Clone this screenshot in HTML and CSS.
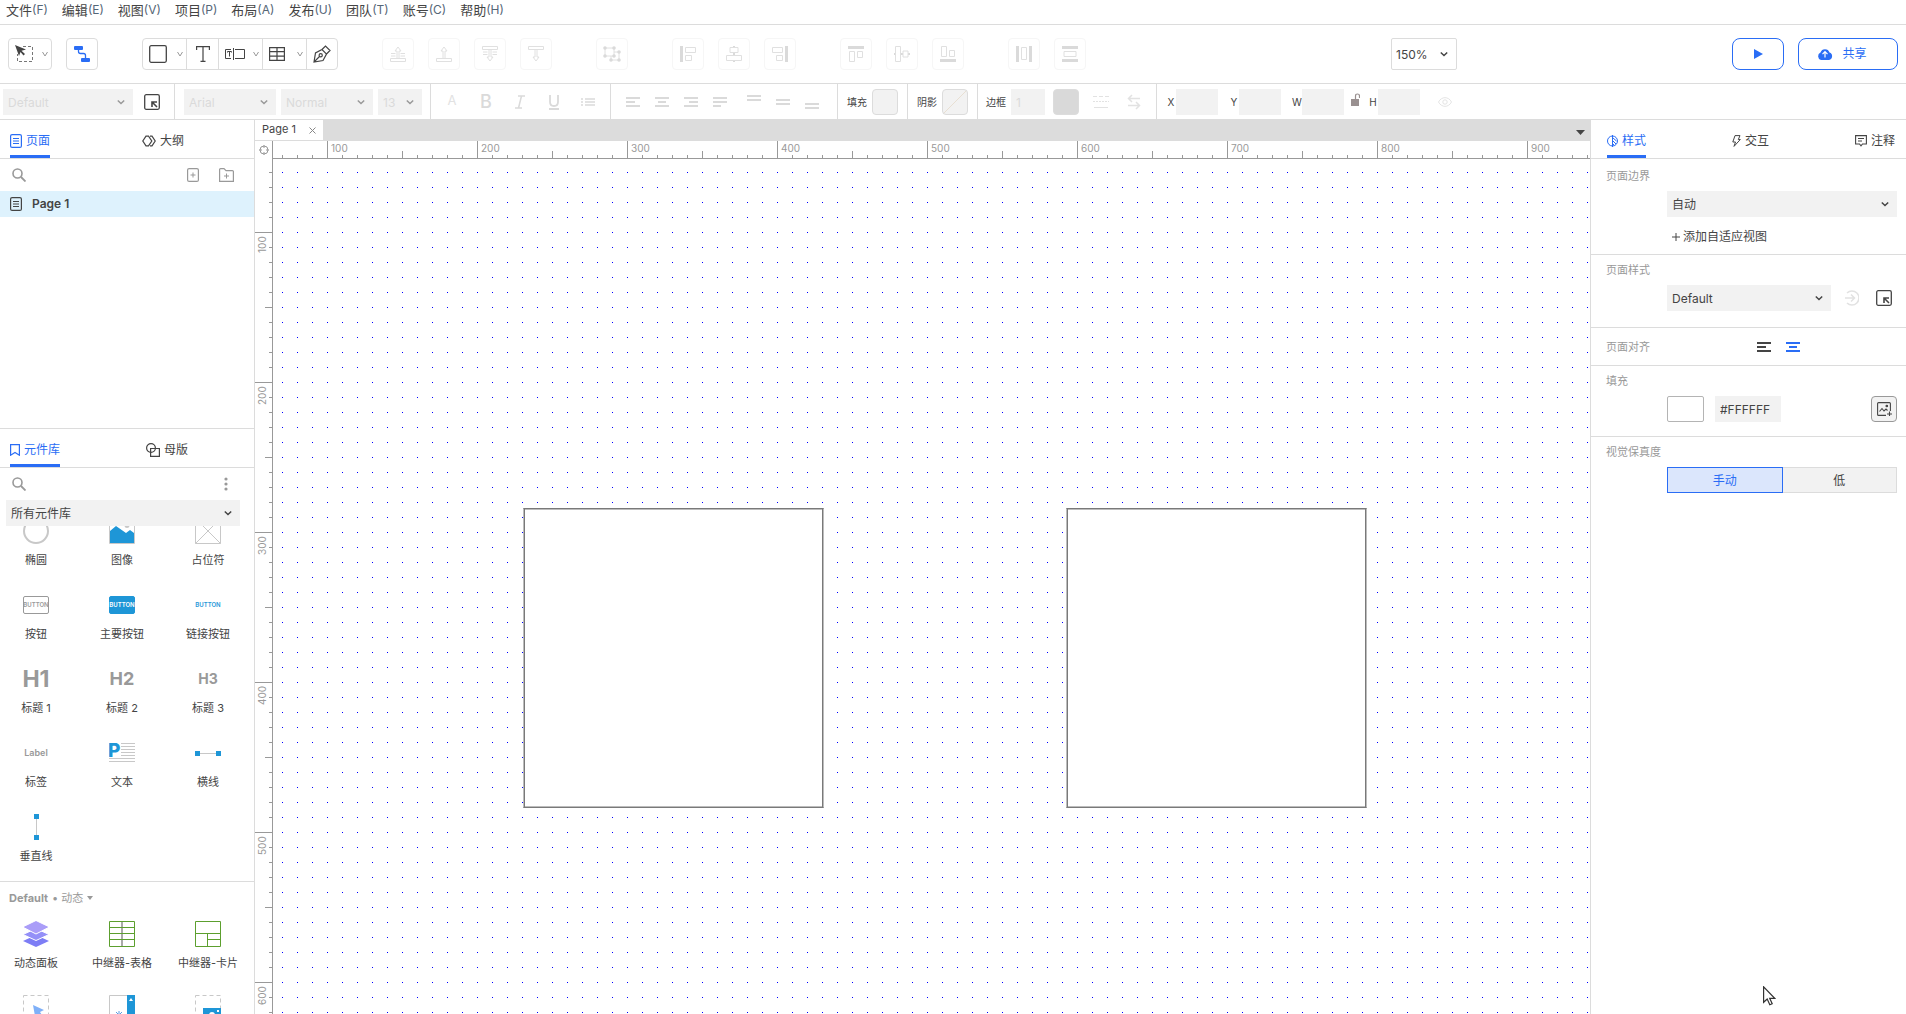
FILE: index.html
```html
<!DOCTYPE html>
<html lang="zh-CN">
<head>
    <meta charset="UTF-8">
    <meta name="viewport" content="width=device-width, initial-scale=1.0">
    <title>Page 1</title>
    <link rel="stylesheet" href="styles.css">
</head>
<body>
    <!-- shared icons -->
    <svg class="sprite" aria-hidden="true">
        <symbol id="chevron" viewBox="0 0 8 8"><path d="M.8 2.500L4 5.500l3.200-3" fill="none" stroke="currentColor" stroke-width="1.500"/></symbol>
        <symbol id="chevron-thin" viewBox="0 0 8 8"><path d="M1.500 2L4 6l2.500-4" fill="none" stroke="currentColor"/></symbol>
        <symbol id="page" viewBox="0 0 12 14"><rect x=".6" y=".6" width="10.800" height="12.800" rx="1.500" fill="none" stroke="currentColor" stroke-width="1.200"/><path d="M3 4.500h6M3 7h6M3 9.500h6" stroke="currentColor"/></symbol>
        <symbol id="search" viewBox="0 0 14 14"><circle cx="5.500" cy="5.500" r="4.500" fill="none" stroke="currentColor" stroke-width="1.600"/><path d="M9 9l4.500 4.500" stroke="currentColor" stroke-width="1.800"/></symbol>
        <symbol id="manage" viewBox="0 0 16 16"><rect x=".7" y=".7" width="14.600" height="14.600" rx="1.500" fill="none" stroke="currentColor" stroke-width="1.300"/><path d="M8 13V8h5M8.300 8.300L13 13" fill="none" stroke="currentColor" stroke-width="1.600"/></symbol>
        <symbol id="align-left" viewBox="0 0 14 10"><path d="M0 1h14M0 5h9M0 9h14" stroke="currentColor" stroke-width="2"/></symbol>
        <symbol id="align-center" viewBox="0 0 14 10"><path d="M0 1h14M3 5h8M0 9h14" stroke="currentColor" stroke-width="2"/></symbol>
    </svg>

    <nav class="menu-bar">
        <button>文件<span>(F)</span></button>
        <button>编辑<span>(E)</span></button>
        <button>视图<span>(V)</span></button>
        <button>项目<span>(P)</span></button>
        <button>布局<span>(A)</span></button>
        <button>发布<span>(U)</span></button>
        <button>团队<span>(T)</span></button>
        <button>账号<span>(C)</span></button>
        <button>帮助<span>(H)</span></button>
    </nav>

    <div class="toolbar">
        <div class="tool-group">
            <button class="tool wide" aria-label="选择">
                <svg width="18" height="18" viewBox="0 0 18 18"><path d="M8 1.500h9.500v15h-15V9" fill="none" stroke="#777" stroke-dasharray="3 2"/><path d="M0 0l11 4.500-4.500 1.300L10 9 8.500 10.500 5.500 7 4 11z" fill="#444"/></svg>
                <svg class="caret"><use href="#chevron-thin"/></svg>
            </button>
            <button class="tool" aria-label="连接线">
                <svg width="16" height="16" viewBox="0 0 16 16" fill="#2a6df5"><rect width="9" height="4" rx="1"/><rect x="7" y="12" width="9" height="4" rx="1"/><path d="M4.500 3v2.500q0 2 2 2h3q2 0 2 2V13" fill="none" stroke="#2a6df5" stroke-width="1.300"/></svg>
            </button>
        </div>
        <div class="tool-strip">
            <button class="tool wide" aria-label="矩形">
                <svg width="18" height="18" viewBox="0 0 18 18"><rect x=".7" y=".7" width="16.600" height="16.600" rx="1.500" fill="none" stroke="#444" stroke-width="1.300"/></svg>
                <svg class="caret"><use href="#chevron-thin"/></svg>
            </button>
            <button class="tool" aria-label="文本">
                <svg width="14" height="16" viewBox="0 0 14 16"><path d="M.6 4V.6h12.800V4M7 .6v14.800M4.500 15.400h5" fill="none" stroke="#444" stroke-width="1.200"/></svg>
            </button>
            <button class="tool wide" aria-label="表单">
                <svg width="20" height="12" viewBox="0 0 20 12" fill="none" stroke="#444"><path d="M6 1.500H.5v9H6M8.500 0v12M10 1.500h9.500v9H10M2.500 4.500v-1h4v1M4.500 3.500v5"/></svg>
                <svg class="caret"><use href="#chevron-thin"/></svg>
            </button>
            <button class="tool wide" aria-label="表格">
                <svg width="16" height="14" viewBox="0 0 16 14"><path d="M.6.600h14.800v12.800H.6zM.6 4.700h14.800M.6 9.200h14.800M8 .6v12.800" fill="none" stroke="#444" stroke-width="1.200"/></svg>
                <svg class="caret"><use href="#chevron-thin"/></svg>
            </button>
            <button class="tool" aria-label="钢笔">
                <svg width="18" height="18" viewBox="0 0 18 18" fill="none" stroke="#444" stroke-width="1.200"><path d="M1 17L2.500 8 9 4.500l4.500 4.500L10 15.500zM1 17l5.500-5.500M9 4.500L12.500 1 17 5.500 13.500 9"/><circle cx="7.700" cy="10.300" r="1.600"/></svg>
            </button>
        </div>
        <div class="tool-group">
            <button class="tool" disabled aria-label="置于顶层"><svg width="16" height="16" viewBox="0 0 16 16"><path d="M.5 12.500h15v3H.5zM7 12.500V5H5l3-4 3 4H9v7.500M1 7.500h4.500M10.500 7.500H15M1 10h4.500M10.500 10H15"/></svg></button>
            <button class="tool" disabled aria-label="上移一层"><svg width="16" height="16" viewBox="0 0 16 16"><path d="M.5 12.500h15v3H.5zM7 12.500V5H5l3-4 3 4H9v7.500"/></svg></button>
            <button class="tool" disabled aria-label="置于底层"><svg width="16" height="16" viewBox="0 0 16 16"><path d="M.5.500h15v3H.5zM7 3.500V11H5l3 4 3-4H9V3.500M1 6h4.500M10.500 6H15M1 8.500h4.500M10.500 8.500H15"/></svg></button>
            <button class="tool" disabled aria-label="下移一层"><svg width="16" height="16" viewBox="0 0 16 16"><path d="M.5.500h15v3H.5zM7 3.500V11H5l3 4 3-4H9V3.500"/></svg></button>
        </div>
        <div class="tool-group">
            <button class="tool" disabled aria-label="组合"><svg width="18" height="16" viewBox="0 0 18 16"><path d="M2 2h9v8H2zM11 6h5v8H8v-4"/><g class="solid"><circle cx="2" cy="2" r="1.800"/><circle cx="11" cy="2" r="1.800"/><circle cx="2" cy="10" r="1.800"/><circle cx="11" cy="10" r="1.800"/><circle cx="16" cy="6" r="1.800"/><circle cx="16" cy="14" r="1.800"/><circle cx="8" cy="14" r="1.800"/></g></svg></button>
        </div>
        <div class="tool-group">
            <button class="tool" disabled aria-label="左对齐"><svg width="16" height="16" viewBox="0 0 16 16"><path class="solid" d="M0 0h3v16H0z"/><path d="M5.500 1.500h10v5h-10zM5.500 9.500h6v5h-6z"/></svg></button>
            <button class="tool" disabled aria-label="水平居中"><svg width="16" height="16" viewBox="0 0 16 16"><path class="solid" d="M7 0h2v2H7zM7 6h2v3H7zM7 14h2v2H7z"/><path d="M4 1.500h8v5H4zM.5 9.500h15v5H.5z"/></svg></button>
            <button class="tool" disabled aria-label="右对齐"><svg width="16" height="16" viewBox="0 0 16 16"><path class="solid" d="M13 0h3v16h-3z"/><path d="M.5 1.500h10v5H.5zM4.500 9.500h6v5h-6z"/></svg></button>
        </div>
        <div class="tool-group">
            <button class="tool" disabled aria-label="顶部对齐"><svg width="16" height="16" viewBox="0 0 16 16"><path class="solid" d="M0 0h16v3H0z"/><path d="M1.500 5.500h5v10h-5zM9.500 5.500h5v6h-5z"/></svg></button>
            <button class="tool" disabled aria-label="垂直居中"><svg width="16" height="16" viewBox="0 0 16 16"><path class="solid" d="M0 7h2v2H0zM7 7h2v2H7zM14 7h2v2h-2z"/><path d="M1.500.500h5v15h-5zM9 5h5v6H9z"/></svg></button>
            <button class="tool" disabled aria-label="底部对齐"><svg width="16" height="16" viewBox="0 0 16 16"><path class="solid" d="M0 13h16v3H0z"/><path d="M1.500.500h5v10h-5zM9.500 4.500h5v6h-5z"/></svg></button>
        </div>
        <div class="tool-group">
            <button class="tool" disabled aria-label="水平分布"><svg width="16" height="16" viewBox="0 0 16 16"><path class="solid" d="M0 0h3v16H0zM13 0h3v16h-3z"/><path d="M5.500 1.500h5v12h-5z"/></svg></button>
            <button class="tool" disabled aria-label="垂直分布"><svg width="16" height="16" viewBox="0 0 16 16"><path class="solid" d="M0 0h16v3H0zM0 13h16v3H0z"/><path d="M2 5.500h12v5H2z"/></svg></button>
        </div>
        <div class="toolbar-end">
            <label class="select zoom-select"><select aria-label="缩放"><option>150%</option></select><svg class="chevron"><use href="#chevron"/></svg></label>
            <div class="tool-group">
                <button class="pill preview" aria-label="预览"><svg width="9" height="10" viewBox="0 0 9 10"><path d="M0 0l9 5-9 5z" fill="currentColor"/></svg></button>
                <button class="pill share"><svg width="16" height="12" viewBox="0 0 16 12"><path d="M4 12a4 4 0 0 1-.5-7.500 4.700 4.700 0 0 1 9 0A3.900 3.900 0 0 1 12 12z" fill="currentColor"/><path d="M8 9.500V4M5.500 6.200L8 3.700l2.500 2.500" fill="none" stroke="#fff" stroke-width="1.200"/></svg>共享</button>
            </div>
        </div>
    </div>

    <div class="style-bar">
        <div class="style-group g-preset">
            <label class="select disabled w-preset"><select disabled aria-label="样式"><option>Default</option></select><svg class="chevron"><use href="#chevron"/></svg></label>
            <button class="icon-btn" aria-label="管理样式"><svg width="16" height="16"><use href="#manage"/></svg></button>
        </div>
        <div class="style-group g-font">
            <label class="select disabled w-font"><select disabled aria-label="字体"><option>Arial</option></select><svg class="chevron"><use href="#chevron"/></svg></label>
            <label class="select disabled w-font"><select disabled aria-label="字重"><option>Normal</option></select><svg class="chevron"><use href="#chevron"/></svg></label>
            <label class="select disabled w-size"><select disabled aria-label="字号"><option>13</option></select><svg class="chevron"><use href="#chevron"/></svg></label>
        </div>
        <div class="style-group g-format">
            <button class="fmt color" disabled>A</button>
            <button class="fmt" disabled>B</button>
            <button class="fmt" disabled aria-label="斜体"><svg width="10" height="14" viewBox="0 0 10 14"><path d="M3 1h7M0 13h7M6.500 1l-3 12" fill="none" stroke="currentColor" stroke-width="1.500"/></svg></button>
            <button class="fmt" disabled aria-label="下划线"><svg width="10" height="15" viewBox="0 0 10 15"><path d="M1 0v7q0 4 4 4t4-4V0M0 14h10" fill="none" stroke="currentColor" stroke-width="1.800"/></svg></button>
            <button class="fmt" disabled aria-label="列表"><svg width="14" height="8" viewBox="0 0 14 8"><path d="M0 1h2M4 1h10M0 4h2M4 4h10M0 7h2M4 7h10" stroke="currentColor" stroke-width="1.400"/></svg></button>
        </div>
        <div class="style-group g-align">
            <button class="fmt" disabled aria-label="左对齐"><svg width="14" height="10"><use href="#align-left"/></svg></button>
            <button class="fmt" disabled aria-label="居中"><svg width="14" height="10"><use href="#align-center"/></svg></button>
            <button class="fmt" disabled aria-label="右对齐"><svg width="14" height="10" viewBox="0 0 14 10"><path d="M0 1h14M5 5h9M0 9h14" stroke="currentColor" stroke-width="2"/></svg></button>
            <button class="fmt justify" disabled aria-label="两端对齐"><svg width="14" height="10" viewBox="0 0 14 10"><path d="M0 1h14M0 5h14M0 9h8" stroke="currentColor" stroke-width="2"/></svg></button>
            <button class="fmt" disabled aria-label="顶部"><svg width="14" height="14" viewBox="0 0 14 14"><path d="M0 1h14M0 5h14" stroke="currentColor" stroke-width="2"/></svg></button>
            <button class="fmt" disabled aria-label="中部"><svg width="14" height="14" viewBox="0 0 14 14"><path d="M0 5h14M0 9h14" stroke="currentColor" stroke-width="2"/></svg></button>
            <button class="fmt" disabled aria-label="底部"><svg width="14" height="14" viewBox="0 0 14 14"><path d="M0 9h14M0 13h14" stroke="currentColor" stroke-width="2"/></svg></button>
        </div>
        <div class="style-group g-swatch"><span>填充</span><button class="swatch" disabled aria-label="填充颜色"></button></div>
        <div class="style-group g-swatch"><span>阴影</span><button class="swatch none" disabled aria-label="阴影颜色"></button></div>
        <div class="style-group g-border">
            <label for="borderWidth">边框</label>
            <input class="field" id="borderWidth" type="text" value="1" disabled>
            <button class="swatch solid" disabled aria-label="边框颜色"></button>
            <button class="icon-btn faint dash" disabled aria-label="线型"><svg width="16" height="12" viewBox="0 0 16 12"><path d="M0 .5h16" stroke="currentColor" stroke-dasharray="4 2"/><path d="M0 5.500h16" stroke="currentColor" stroke-dasharray="2 1"/><path d="M1 11.500h14" stroke="currentColor"/></svg></button>
            <button class="icon-btn faint" disabled aria-label="箭头"><svg width="14" height="16" viewBox="0 0 14 16"><path d="M13 4.500H1.500M5 1L1.500 4.500 5 8M1 11.500h11.500M9 8l3.500 3.500L9 15" fill="none" stroke="currentColor" stroke-width="1.500"/></svg></button>
        </div>
        <div class="style-group g-position">
            <label for="posX">X</label><input class="field" id="posX" type="text" disabled>
            <label for="posY">Y</label><input class="field" id="posY" type="text" disabled>
            <label for="sizeW">W</label><input class="field" id="sizeW" type="text" disabled>
            <svg class="lock" width="9" height="14" viewBox="0 0 9 14"><path d="M0 6h8v7H0z" fill="#999090"/><path d="M4.500 6V3q0-2 2-2t2 2v2" fill="none" stroke="#999090" stroke-width="1.200"/></svg>
            <label for="sizeH">H</label><input class="field" id="sizeH" type="text" disabled>
            <svg class="eye" width="14" height="10" viewBox="0 0 14 10" fill="none" stroke="#e4e4e4"><path d="M.5 5C3.500-.8 10.500-.8 13.500 5 10.500 10.800 3.500 10.800.5 5z"/><circle cx="7" cy="5" r="2.200"/></svg>
        </div>
    </div>

    <main class="workspace">
        <aside class="left-panel">
            <section class="pages">
                <div class="tabs">
                    <button class="tab active"><svg width="12" height="14"><use href="#page"/></svg>页面</button>
                    <button class="tab outline"><svg width="14" height="12" viewBox="0 0 14 12" fill="none" stroke="currentColor" stroke-width="1.200"><path d="M4 1.200L.8 6 4 10.800h2.500L9.800 6 6.500 1.200zM8 1.200h2L13.200 6 10 10.800H8"/></svg>大纲</button>
                </div>
                <div class="search-row">
                    <button class="icon-btn muted" aria-label="搜索"><svg width="14" height="14"><use href="#search"/></svg></button>
                    <div class="row-actions">
                        <button class="icon-btn muted" aria-label="添加页面"><svg width="12" height="14" viewBox="0 0 12 14"><rect x=".6" y=".6" width="10.800" height="12.800" rx="1.500" fill="none" stroke="currentColor" stroke-width="1.200"/><path d="M6 4.500v5M3.500 7h5" stroke="currentColor"/></svg></button>
                        <button class="icon-btn muted" aria-label="添加文件夹"><svg width="15" height="14" viewBox="0 0 15 14"><path d="M.6 13.400V1.600q0-1 1-1h3.400l2 2h6.400q1 0 1 1v9.800z" fill="none" stroke="currentColor" stroke-width="1.200"/><path d="M7.500 5.500v5M5 8h5" stroke="currentColor"/></svg></button>
                    </div>
                </div>
                <a class="page-row" href="#"><svg width="12" height="14"><use href="#page"/></svg>Page 1</a>
            </section>
            <section class="library">
                <div class="tabs">
                    <button class="tab active"><svg width="10" height="12" viewBox="0 0 10 12"><path d="M.6.600h8.800v10.600L5 8.500.6 11.200z" fill="none" stroke="currentColor" stroke-width="1.200"/></svg>元件库</button>
                    <button class="tab master"><svg width="14" height="14" viewBox="0 0 14 14" fill="none" stroke="currentColor" stroke-width="1.200"><circle cx="5" cy="5" r="4.400"/><path d="M4.600 9.500v3.900h8.800V5.500H4.600V9.500"/></svg>母版</button>
                </div>
                <div class="search-row">
                    <button class="icon-btn muted" aria-label="搜索"><svg width="14" height="14"><use href="#search"/></svg></button>
                    <div class="row-actions"><button class="icon-btn muted more" aria-label="更多"><svg width="4" height="14" viewBox="0 0 4 14" fill="currentColor"><circle cx="2" cy="2" r="1.600"/><circle cx="2" cy="7" r="1.600"/><circle cx="2" cy="12" r="1.600"/></svg></button></div>
                </div>
                <label class="select lib-select"><select aria-label="元件库"><option>所有元件库</option></select><svg class="chevron"><use href="#chevron"/></svg></label>
                <div class="widget-scroll">
                    <ul class="widgets basic">
                        <li><svg viewBox="0 0 26 26"><circle cx="13" cy="13" r="12" fill="none" stroke="#c8c8c8" stroke-width="2"/></svg>椭圆</li>
                        <li><svg viewBox="0 0 26 26"><path d="M.5.500h25v25H.5z" fill="none" stroke="#c8c8c8"/><circle cx="18" cy="7.500" r="2.500" fill="#c8c8c8"/><path d="M1 13l6-5 10 7 4-3 4 3v10H1z" fill="#1e96d7"/></svg>图像</li>
                        <li><svg viewBox="0 0 26 26"><path d="M.5.500h25v25H.5zM.5.500l25 25M25.500.500l-25 25" fill="none" stroke="#c8c8c8"/></svg>占位符</li>
                        <li><span class="mini-btn">BUTTON</span>按钮</li>
                        <li><span class="mini-btn primary">BUTTON</span>主要按钮</li>
                        <li><span class="mini-btn link">BUTTON</span>链接按钮</li>
                        <li><span class="sample h1">H1</span>标题 1</li>
                        <li><span class="sample h2">H2</span>标题 2</li>
                        <li><span class="sample h3">H3</span>标题 3</li>
                        <li><span class="sample lbl">Label</span>标签</li>
                        <li><svg viewBox="0 0 26 26"><text x="-1" y="17" class="para">P</text><path d="M12 3.500h14M12 6.500h14M12 9.500h14M12 12.500h14M12 15.500h14M0 18.500h26M0 21.500h26" stroke="#c8c8c8"/></svg>文本</li>
                        <li><svg viewBox="0 0 26 26"><path d="M5 13.500h16" stroke="#c8c8c8"/><path d="M0 11h5v5H0zM21 11h5v5h-5z" fill="#1e96d7"/></svg>横线</li>
                        <li><svg viewBox="0 0 26 26"><path d="M13.500 5v16" stroke="#c8c8c8"/><path d="M11 0h5v5h-5zM11 21h5v5h-5z" fill="#1e96d7"/></svg>垂直线</li>
                    </ul>
                    <h3 class="lib-heading"><b>Default</b> • 动态 <svg width="6" height="4" viewBox="0 0 6 4"><path d="M0 0h6L3 4z" fill="currentColor"/></svg></h3>
                    <ul class="widgets">
                        <li><svg viewBox="0 0 26 26"><path d="M13 14l13 6-13 6-13-6z" fill="#7d7df5"/><path d="M13 7.500l13 6-13 6-13-6z" fill="#9490f8" stroke="#fff"/><path d="M13-.5l13.500 6.500L13 13-.5 6z" fill="#aa9df8" stroke="#fff"/></svg>动态面板</li>
                        <li><svg viewBox="0 0 26 26"><path d="M13 0v26" stroke="#aaa" stroke-width="2"/><path d="M.5.500h25v25H.5zM0 6.500h26M0 12.500h26M0 18.500h26" fill="none" stroke="#5c9f2e"/></svg>中继器-表格</li>
                        <li><svg viewBox="0 0 26 26"><path d="M.5.500h25v25H.5zM0 12.500h26M12.500 12.500v13M12.500 18.500h13" fill="none" stroke="#5c9f2e"/></svg>中继器-卡片</li>
                        <li><svg viewBox="0 0 26 26"><path d="M.5.500h25v25H.5z" fill="none" stroke="#c8c8c8" stroke-dasharray="4 3"/><path d="M10 10l11 5-4 2 4 6-3 2-4-6-2 2z" fill="#7fb0f8"/></svg></li>
                        <li><svg viewBox="0 0 26 26"><path d="M.5.500h25v25H.5z" fill="none" stroke="#c8c8c8"/><path d="M18 0h8v26h-8z" fill="#1e96d7"/><path d="M20 6l2-3 2 3z" fill="#fff"/><path d="M10 16v8M6 20h8M7 17l6 6M13 17l-6 6" stroke="#5a9be0"/></svg></li>
                        <li><svg viewBox="0 0 26 26"><path d="M.5.500h25v25H.5z" fill="none" stroke="#c8c8c8" stroke-dasharray="4 3"/><path d="M8 13h18v13H8z" fill="#1e96d7"/><path d="M22 15h2v2h-2z" fill="#fff"/><circle cx="17" cy="20" r="3" fill="#fff"/></svg></li>
                    </ul>
                </div>
            </section>
        </aside>

        <section class="editor">
            <div class="doc-tabs">
                <div class="doc-tab">Page 1<button class="close" aria-label="关闭"><svg width="7" height="7" viewBox="0 0 7 7"><path d="M.5.500l6 6M6.500.500l-6 6" stroke="currentColor"/></svg></button></div>
                <button class="tab-menu" aria-label="标签列表"><svg width="9" height="5" viewBox="0 0 9 5"><path d="M0 0h9L4.500 5z" fill="currentColor"/></svg></button>
            </div>
            <div class="stage">
                <div class="corner"><svg width="10" height="10" viewBox="0 0 10 10"><circle cx="5" cy="5" r="4" fill="none" stroke="#999"/><path d="M5 0v3M5 7v3M0 5h3M7 5h3" stroke="#999"/></svg></div>
                <div class="ruler-x"><span>100</span><span>200</span><span>300</span><span>400</span><span>500</span><span>600</span><span>700</span><span>800</span><span>900</span></div>
                <div class="ruler-y"><span>100</span><span>200</span><span>300</span><span>400</span><span>500</span><span>600</span></div>
                <div class="canvas">
                    <svg class="grid" aria-hidden="true">
                        <pattern id="dots" width="15" height="15" patternUnits="userSpaceOnUse"><rect x="9" y="13" width="1" height="1" fill="#00f"/></pattern>
                        <rect width="100%" height="100%" fill="url(#dots)"/>
                    </svg>
                    <div class="shape shape-a"></div>
                    <div class="shape shape-b"></div>
                </div>
            </div>
        </section>

        <aside class="right-panel">
            <div class="tabs spread">
                <button class="tab active"><svg width="11" height="12" viewBox="0 0 11 12" fill="none" stroke="currentColor"><circle cx="5.500" cy="6" r="5"/><path d="M5.500 0v12M6 3l3.500 3M6 6l3 3M6 9l1.500 1.500"/></svg>样式</button>
                <button class="tab"><svg width="9" height="12" viewBox="0 0 9 12"><path d="M3 .6h5L6.300 4.500h2L2 11.400 3.500 7H.8z" fill="none" stroke="currentColor"/></svg>交互</button>
                <button class="tab"><svg width="12" height="12" viewBox="0 0 12 12"><path d="M.6.600h10.800v8.400H7.500L6 10.800 4.500 9H.6zM3 3.500h6M3 6h4" fill="none" stroke="currentColor" stroke-width="1.100"/></svg>注释</button>
            </div>
            <section class="prop first">
                <h4>页面边界</h4>
                <div class="prop-body">
                    <label class="select"><select aria-label="页面边界"><option>自动</option></select><svg class="chevron"><use href="#chevron"/></svg></label>
                </div>
                <a class="add-view" href="#"><svg width="8" height="8" viewBox="0 0 8 8"><path d="M4 0v8M0 4h8" stroke="currentColor"/></svg>添加自适应视图</a>
            </section>
            <section class="prop page-style">
                <h4>页面样式</h4>
                <div class="prop-body">
                    <label class="select"><select aria-label="页面样式"><option>Default</option></select><svg class="chevron"><use href="#chevron"/></svg></label>
                    <button class="icon-btn faint" disabled aria-label="更新样式"><svg width="14" height="16" viewBox="0 0 14 16"><path d="M2 3A7 7 0 1 1 2 13M0 8h9M6 4.500L9.500 8 6 11.500" fill="none" stroke="currentColor" stroke-width="1.500"/></svg></button>
                    <button class="icon-btn manage" aria-label="管理样式"><svg width="16" height="16"><use href="#manage"/></svg></button>
                </div>
            </section>
            <section class="prop inline">
                <h4>页面对齐</h4>
                <div class="align-pair">
                    <button class="icon-btn" aria-label="左对齐"><svg width="14" height="10"><use href="#align-left"/></svg></button>
                    <button class="icon-btn on" aria-label="居中"><svg width="14" height="10"><use href="#align-center"/></svg></button>
                </div>
            </section>
            <section class="prop">
                <h4>填充</h4>
                <div class="prop-body">
                    <button class="fill-swatch" aria-label="填充颜色"></button>
                    <input class="field hex" type="text" value="#FFFFFF" aria-label="颜色值">
                    <button class="image-btn" aria-label="图片填充"><svg width="15" height="14" viewBox="0 0 15 14" fill="none" stroke="#444" stroke-width="1.100"><path d="M9 13.400H1.600q-1 0-1-1V1.600q0-1 1-1h10.800q1 0 1 1V9M2.500 9.500l2.500-3 2 2.500 2-2 1.500 1.500M12.500 9.500v4.500M10 12h5"/><circle cx="9.800" cy="4" r=".8" fill="#444"/></svg></button>
                </div>
            </section>
            <section class="prop last">
                <h4>视觉保真度</h4>
                <div class="prop-body segmented">
                    <button class="on">手动</button>
                    <button>低</button>
                </div>
            </section>
        </aside>
    </main>

    <svg class="cursor" width="13" height="20" viewBox="0 0 13 20"><path d="M.6.800v15.500l3.600-3.200 2.600 5.700 2.400-1.100-2.500-5.400h5z" fill="#fff" stroke="#333" stroke-width="1.200"/></svg>
</body>
</html>
```
FILE: styles.css
```css
* { margin: 0; padding: 0; box-sizing: border-box; }
body { font-family: Inter, 'Noto Sans CJK SC', sans-serif; font-size: 12px; line-height: 16px; color: #444; background: #fff; height: 100vh; overflow: hidden; display: flex; flex-direction: column; }
button, input, select { font: inherit; color: inherit; background: none; border: none; outline: none; }
button { display: flex; align-items: center; justify-content: center; white-space: nowrap; }
a { color: inherit; text-decoration: none; }
ul { list-style: none; }
svg { display: block; flex: none; }
.sprite { position: absolute; width: 0; height: 0; }

/* menu */
.menu-bar { display: flex; gap: 14px; padding: 2px 6px 6px; border-bottom: 1px solid #dcdcdc; flex: none; }
.menu-bar button { font-size: 13px; }
.menu-bar span { font-size: 12px; color: #567; }

/* toolbar */
.toolbar { display: flex; align-items: center; gap: 44px; padding: 13px 8px; border-bottom: 1px solid #dcdcdc; flex: none; }
.tool-group { display: flex; gap: 14px; }
.tool { width: 32px; height: 32px; border: 1px solid #dcdcdc; border-radius: 4px; }
.tool.wide { width: 44px; justify-content: space-between; padding: 0 2px 0 6px; }
.tool:disabled { border-color: #f6f6f6; }
.tool:disabled svg { fill: none; stroke: #e0e0e0; }
.tool:disabled .solid { fill: #dadada; stroke: none; }
.caret { width: 8px; height: 8px; color: #999; }
.tool-strip { display: flex; width: 196px; border: 1px solid #dcdcdc; border-radius: 4px; }
.tool-strip .tool { height: 30px; border: none; border-radius: 0; }
.tool-strip .tool + .tool { border-left: 1px solid #dcdcdc; }
.tool-strip .tool:first-child { width: 43px; }
.tool-strip .tool:last-child { width: 31px; }
.toolbar-end { flex: 1; display: flex; justify-content: flex-end; gap: 275px; }
.pill { height: 32px; border: 1px solid #2a6df5; border-radius: 8px; color: #2a6df5; }
.preview { width: 52px; }
.share { width: 100px; gap: 9px; padding-right: 12px; }

/* form pieces */
.select { display: grid; align-items: center; height: 26px; background: #f2f2f2; }
.select select { grid-area: 1 / 1; width: 100%; height: 100%; appearance: none; padding: 1px 20px 0 5px; opacity: 1; }
.select .chevron { grid-area: 1 / 1; justify-self: end; width: 8px; height: 8px; margin-right: 8px; pointer-events: none; }
.select.disabled select { color: #dadada; }
.select.disabled .chevron { color: #999; }
.zoom-select { width: 66px; height: 32px; background: #fff; border: 1px solid #dcdcdc; border-radius: 2px; }
.zoom-select select { padding-left: 4px; }
.field { width: 42px; height: 26px; background: #f2f2f2; padding: 0 5px; }
.field:disabled { color: #dadada; }
.icon-btn.muted { color: #999; }
.icon-btn.faint { color: #e2e2e2; }

/* style bar */
.style-bar { display: flex; height: 36px; border-bottom: 1px solid #dcdcdc; flex: none; }
.style-group { display: flex; align-items: center; padding-top: 1px; flex: none; }
.style-group + .style-group { border-left: 1px solid #dcdcdc; }
.g-preset { gap: 11px; padding-left: 3px; padding-right: 14px; }
.g-font { gap: 5px; padding-left: 9px; padding-right: 8px; }
.w-preset { width: 130px; }
.w-font { width: 92px; }
.w-size { width: 44px; }
.g-format { padding-left: 4px; padding-right: 5px; }
.fmt { width: 34px; height: 26px; color: #dadada; font-size: 18px; font-weight: 500; }
.fmt.color { font-size: 13px; font-weight: 400; padding-bottom: 4px; color: #e2e2e2; }
.g-align { padding-left: 7px; padding-right: 11px; }
.g-align .fmt { width: 29px; }
.g-align .justify { margin-right: 5px; }
.g-swatch, .g-border, .g-position { font-size: 10px; }
.g-swatch { gap: 5px; padding-left: 9px; padding-right: 9px; }
.swatch { width: 26px; height: 26px; background: #f2f2f2; border: 1px solid #dcdcdc; border-radius: 4px; }
.swatch.none { background: linear-gradient(to bottom right, transparent 48%, #e8dfd2 49%, #e8dfd2 51%, transparent 52%) #f2f2f2; }
.swatch.solid { background: #d9d9d9; margin-left: 8px; margin-right: 14px; }
.g-border { padding-left: 8px; padding-right: 15px; }
.g-border label { margin-right: 5px; }
.g-border .field { width: 34px; font-size: 12px; }
.g-border .dash { margin-right: 18px; }
.g-position { padding-left: 9px; }
.g-position label { width: 10px; text-align: center; }
.g-position .field { margin-right: 11px; }
.g-position #sizeW { margin-right: 7px; }
.lock { margin-right: 8px; margin-bottom: 4px; }
.eye { margin-left: 7px; }

/* workspace */
.workspace { flex: 1; min-height: 0; display: flex; }
.left-panel { width: 255px; border-right: 1px solid #dcdcdc; display: flex; flex-direction: column; flex: none; }
.right-panel { width: 316px; border-left: 1px solid #dcdcdc; flex: none; }
.tabs { display: flex; height: 39px; border-bottom: 1px solid #dcdcdc; padding-left: 10px; flex: none; }
.tab { gap: 4px; padding-top: 6px; border-bottom: 3px solid transparent; }
.tab.active { color: #2a6df5; border-color: #2a6df5; }
.tab.outline { margin-left: 92px; }
.tab.master { margin-left: 86px; }
.tabs.spread { justify-content: space-between; padding: 0 11px 0 16px; }

.pages { height: 308px; flex: none; }
.search-row { display: flex; align-items: center; height: 32px; padding: 0 20px 0 12px; }
.row-actions { display: flex; gap: 20px; margin-left: auto; }
.more { margin-right: 6px; }
.page-row { display: flex; align-items: center; gap: 10px; height: 26px; padding-left: 10px; background: #def2fd; font-weight: 600; }

.library { flex: 1; min-height: 0; display: flex; flex-direction: column; border-top: 1px solid #dcdcdc; }
.lib-select { margin: 0 14px 0 6px; flex: none; }
.widget-scroll { flex: 1; min-height: 0; overflow: hidden; }
.widgets { display: grid; grid-template-columns: repeat(3, 72px); column-gap: 14px; row-gap: 24px; padding-top: 7px; }
.widgets li { display: flex; flex-direction: column; align-items: center; gap: 8px; font-size: 11px; white-space: nowrap; }
.widgets svg { width: 26px; height: 26px; }
.widgets.basic { margin-top: -8px; padding: 0 0 17px; border-bottom: 1px solid #dcdcdc; }
.mini-btn { width: 26px; height: 18px; margin: 4px 0; border: 1px solid #999; border-radius: 2px; color: #999; font-size: 6px; font-weight: 600; line-height: 16px; text-align: center; display: flex; justify-content: center; }
.mini-btn.primary { background: #1e96d7; border-color: #1e96d7; color: #fff; }
.mini-btn.link { border-color: transparent; color: #1e96d7; }
.sample { height: 26px; line-height: 26px; font-weight: 700; color: #999; }
.sample.h1 { font-size: 23px; }
.sample.h2 { font-size: 18px; }
.sample.h3 { font-size: 14px; }
.sample.lbl { font-size: 9px; font-weight: 600; }
.para { font-size: 19px; font-weight: 800; fill: #1e96d7; }
.lib-heading { display: flex; align-items: center; gap: 4px; height: 32px; padding-left: 9px; font-size: 11px; font-weight: 400; color: #999; }

/* editor */
.editor { flex: 1; min-width: 0; display: flex; flex-direction: column; }
.doc-tabs { display: flex; justify-content: space-between; height: 21px; background: #dcdcdc; flex: none; }
.doc-tab { display: flex; align-items: center; gap: 13px; height: 20px; padding: 0 7px 2px; background: #fff; font-size: 11px; }
.close { color: #888; padding-top: 2px; }
.tab-menu { padding-right: 5px; padding-top: 4px; }
.stage { flex: 1; min-height: 0; display: grid; grid-template-columns: 18px 1fr; grid-template-rows: 18px 1fr; }
.corner { display: flex; align-items: center; justify-content: center; border-right: 1px solid #999; }
.ruler-x, .ruler-y { overflow: hidden; color: #999; font-size: 10px; background-repeat: repeat-x; }
.ruler-x { display: flex; padding-left: 54px; border-bottom: 1px solid #999; line-height: 14px;
    background-image: linear-gradient(to right, #999 1px, transparent 1px), linear-gradient(to right, #999 1px, transparent 1px), linear-gradient(to right, #999 1px, transparent 1px);
    background-size: 150px 17px, 150px 7px, 15px 3px;
    background-position: 54px 100%, 129px 100%, 9px 100%; }
.ruler-x span { width: 150px; padding-left: 4px; flex: none; }
.ruler-y { padding-top: 73px; border-right: 1px solid #999; line-height: 15px; background-repeat: repeat-y;
    background-image: linear-gradient(#999 1px, transparent 1px), linear-gradient(#999 1px, transparent 1px), linear-gradient(#999 1px, transparent 1px);
    background-size: 17px 150px, 7px 150px, 3px 15px;
    background-position: 100% 73px, 100% 148px, 100% 13px; }
.ruler-y span { display: block; height: 150px; padding-bottom: 4px; writing-mode: vertical-rl; transform: rotate(180deg); text-align: end; }
.canvas { position: relative; overflow: hidden; }
.grid { width: 100%; height: 100%; }
.shape { position: absolute; width: 301px; height: 300px; background: #fff; border: 1px solid; border-color: #797979 #bcbcbc #797979 #bcbcbc; box-shadow: inset 1px 0 #797979, inset -1px 0 #797979, inset 0 1px #bcbcbc, inset 0 -1px #bcbcbc; }
.shape-a { left: 250px; top: 349px; }
.shape-b { left: 793px; top: 349px; }

/* properties */
.prop { padding: 7px 9px 14px 15px; border-bottom: 1px solid #dcdcdc; }
.prop h4 { font-size: 11px; font-weight: 400; color: #999; }
.prop.first { padding-top: 9px; padding-bottom: 9px; }
.prop.page-style { padding-bottom: 16px; }
.prop.inline { display: flex; align-items: center; height: 38px; padding-top: 0; padding-bottom: 0; }
.prop.last { border-bottom: none; }
.prop-body { display: flex; align-items: center; margin-top: 7px; margin-left: 61px; }
.prop-body .select { flex: 1; }
.add-view { display: flex; align-items: center; gap: 3px; margin-top: 12px; margin-left: 66px; }
.page-style .faint { margin-left: 14px; }
.page-style .manage { margin: 0 5px 0 17px; }
.align-pair { display: flex; gap: 15px; margin-left: 107px; }
.align-pair .on { color: #2a6df5; }
.fill-swatch { width: 37px; height: 26px; border: 1px solid #b4b4b4; border-radius: 2px; }
.field.hex { width: 66px; margin-left: 11px; }
.image-btn { width: 26px; height: 26px; margin-left: auto; background: #f2f2f2; border: 1px solid #999; border-radius: 4px; }
.segmented button { flex: 1; height: 26px; padding-top: 1px; background: #f2f2f2; border: 1px solid #dcdcdc; }
.segmented .on { background: #dbe6fc; border-color: #2a6df5; color: #2a6df5; }
.segmented button + button { border-left: none; }

.cursor { position: absolute; right: 130px; bottom: 8px; }
```
